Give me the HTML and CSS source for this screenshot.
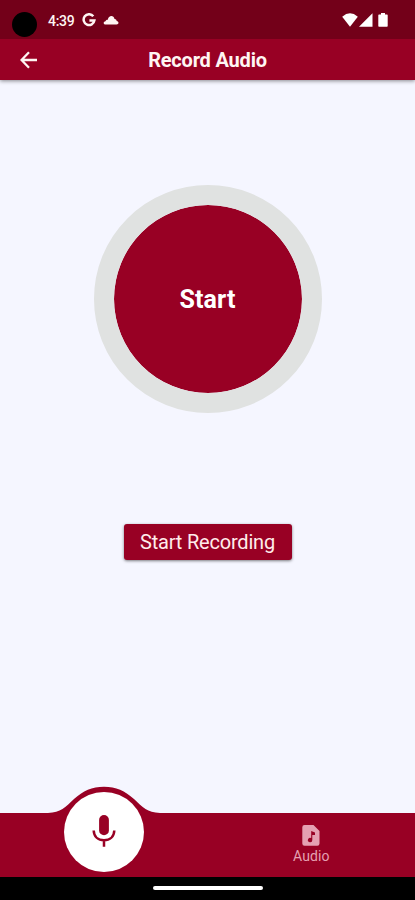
FILE: index.html
```html
<!DOCTYPE html>
<html lang="en">
<head>
<meta charset="utf-8">
<title>Record Audio</title>
<link rel="stylesheet" href="styles.css">
</head>
<body>
<div class="screen">
  <div class="status">
    <span class="camera"></span>
    <span class="clock">4:39</span>
    <svg class="google" viewBox="0 0 14 14"><path d="M11.3 3.3A5.4 5.4 0 1 0 12.4 7.4H7.4" fill="none" stroke="currentColor" stroke-width="2.5"/></svg>
    <svg class="cloud" viewBox="0 0 16 10"><path d="M2.600 9.500C.2 9.500-.2 6.600 2.500 6.200C3 5 4 4.700 4.800 4.800C5.500-.2 11-.1 11.500 4.100C12.600 4 13.600 4.800 13.700 6C16.200 6.300 16 9.500 13.500 9.500Z" fill="currentColor"/></svg>
    <span class="system">
      <svg width="16" height="14" viewBox="0 0 16 14"><path d="M8 13.700L.2 3.700Q8-3 15.800 3.700Z" fill="currentColor"/></svg>
      <svg width="14" height="14" viewBox="0 0 14 14"><path d="M0 13.700L13.500.3V13.700Z" fill="currentColor"/></svg>
      <svg class="battery" width="10" height="14" viewBox="0 0 10 14"><path d="M3 0H7V1.400H9Q9.700 1.400 9.700 2.200V13Q9.700 13.800 9 13.800H1Q.3 13.800.3 13V2.200Q.3 1.400 1 1.400H3Z" fill="currentColor"/></svg>
    </span>
  </div>
  <header class="appbar">
    <svg class="back" viewBox="0 0 18 18"><path d="M17 9H2M9 1.300L1.500 9L9 16.700" fill="none" stroke="currentColor" stroke-width="2.300"/></svg>
    <h1 class="title">Record Audio</h1>
  </header>
  <main class="content">
    <div class="ring">Start</div>
    <button class="record">Start Recording</button>
  </main>
  <nav class="nav">
    <svg class="bump" viewBox="0 0 120 28"><path d="M4 27C17 26.500 21 21.500 30 13C39 4.800 48 .7 60 .7S81 4.800 90 13C99 21.500 103 26.500 116 27V28H4Z" fill="currentColor"/></svg>
    <div class="tab">
      <span class="mic">
        <svg width="26" height="34" viewBox="0 0 26 34"><rect x="8.100" y="0" width="9.800" height="20.300" rx="4.900" fill="currentColor"/><path d="M2.700 15.500C2.900 21.500 7 25.300 13 25.300S23.100 21.500 23.300 15.500M13 25.300V31.800" fill="none" stroke="currentColor" stroke-width="2.500"/></svg>
      </span>
    </div>
    <div class="tab audio">
      <svg width="18" height="21" viewBox="0 0 18 21"><path fill-rule="evenodd" d="M2.500 0H11.500L17.500 6V18.500Q17.500 20.700 15.300 20.700H2.500Q.3 20.700.3 18.500V2.200Q.3 0 2.500 0ZM9.200 6V13.100A2.200 2.200 0 1 0 10.300 15V9.900H13V7.600L9.200 6Z" fill="currentColor"/></svg>
      <span class="label">Audio</span>
    </div>
  </nav>
  <div class="gesture"><span class="handle"></span></div>
</div>
</body>
</html>
```
FILE: styles.css
```css
* { box-sizing: border-box; }
body { margin: 0; font-family: Roboto, sans-serif; background: #f5f6ff; }
svg { display: block; flex: none; }
.screen { width: 415px; height: 900px; display: flex; flex-direction: column; overflow: hidden; }
.status { height: 39px; position: relative; z-index: 2; background: #730019; color: #fff5f3; display: flex; align-items: center; padding: 1px 27px 0 12px; }
.camera { width: 25px; height: 25px; border-radius: 50%; background: #000; margin-top: 9px; }
.clock { width: 34px; margin-left: 11px; font-size: 14px; font-weight: 500; letter-spacing: -0.3px; line-height: 20px; margin-top: 1px; }
.google { width: 14px; height: 14px; margin-top: 0; }
.cloud { width: 16px; height: 10px; margin-left: 7px; }
.system { display: flex; margin-left: auto; gap: 1px; color: #fff; }
.battery { margin-left: 4px; }
.appbar { height: 41px; background: #980024; color: #fff5f3; display: grid; grid-template-columns: 38px 1fr 38px; align-items: center; box-shadow: 0 1px 4px rgba(0, 0, 0, .45); z-index: 1; }
.back { width: 18px; height: 18px; margin-left: 20px; }
.title { margin: 0; text-align: center; font-size: 20px; font-weight: 700; letter-spacing: -0.2px; line-height: 24px; }
.content { flex: 1; display: flex; flex-direction: column; align-items: center; padding-top: 105px; }
.ring { width: 228px; height: 228px; flex: none; border: 20px solid #e0e2e1; border-radius: 50%; background: #980024; background-clip: padding-box; color: #fff; display: flex; align-items: center; justify-content: center; font-size: 25px; font-weight: 700; letter-spacing: .1px; }
.record { width: 168px; height: 36px; margin-top: 111px; padding: 0; border: 0; border-radius: 3px; background: #980024; color: #ffeceb; font: 400 20px Roboto, sans-serif; letter-spacing: -.2px; box-shadow: 0 1px 3px rgba(0, 0, 0, .5); }
.nav { height: 64px; position: relative; background: #980024; color: #980024; display: grid; grid-template-columns: 1fr 1fr; }
.bump { position: absolute; left: 44px; top: -27px; width: 120px; height: 28px; }
.tab { position: relative; display: flex; flex-direction: column; align-items: center; }
.mic { position: absolute; left: 64px; top: -21px; width: 80px; height: 80px; border-radius: 50%; background: #fff; display: flex; align-items: center; justify-content: center; }
.audio { color: #e5a0b2; padding-top: 12px; }
.label { font-size: 14px; line-height: 16px; margin-top: 2px; letter-spacing: .1px; }
.gesture { height: 23px; background: #000; display: flex; justify-content: center; padding-top: 9px; }
.handle { width: 110px; height: 4px; border-radius: 2px; background: #fff; }
```
